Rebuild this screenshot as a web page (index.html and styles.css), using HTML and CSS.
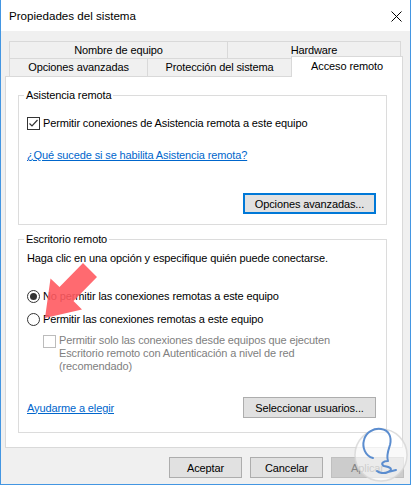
FILE: index.html
```html
<!DOCTYPE html>
<html lang="es">
<head>
<meta charset="utf-8">
<title>Propiedades del sistema</title>
<link rel="stylesheet" href="styles.css">
</head>
<body>
<div class="window">
  <div class="titlebar">
    <span class="title">Propiedades del sistema</span>
    <svg class="close" width="11" height="11" viewBox="0 0 11 11"><path d="M0.5 0.5 L10.5 10.5 M10.5 0.5 L0.5 10.5" stroke="#000" stroke-width="1" fill="none"/></svg>
  </div>
  <div class="content">
    <div class="tabs">
      <div class="tabrow row1">
        <div class="tab t-nombre">Nombre de equipo</div>
        <div class="tab t-hw">Hardware</div>
      </div>
      <div class="tabrow row2">
        <div class="tab t-opc">Opciones avanzadas</div>
        <div class="tab t-prot">Protección del sistema</div>
        <div class="tab t-acc selected">Acceso remoto</div>
      </div>
    </div>
    <div class="panel">
      <fieldset class="group g1">
        <legend>Asistencia remota</legend>
        <div class="row check-row">
          <span class="checkbox checked"><svg width="11" height="11" viewBox="0 0 11 11"><path d="M1.5 5.5 L4 8 L9.5 2" stroke="#333" stroke-width="1.2" fill="none"/></svg></span>
          <span>Permitir conexiones de Asistencia remota a este equipo</span>
        </div>
        <div class="row link-row"><a class="link" href="#">¿Qué sucede si se habilita Asistencia remota?</a></div>
        <div class="btn-row"><span class="btn focused wide">Opciones avanzadas...</span></div>
      </fieldset>
      <fieldset class="group g2">
        <legend>Escritorio remoto</legend>
        <div class="row desc-row">Haga clic en una opción y especifique quién puede conectarse.</div>
        <div class="row radio-row r1"><span class="radio on"></span><span>No permitir las conexiones remotas a este equipo</span></div>
        <div class="row radio-row r2"><span class="radio"></span><span>Permitir las conexiones remotas a este equipo</span></div>
        <div class="sub">
          <span class="checkbox disabled"></span>
          <span class="sub-text">Permitir solo las conexiones desde equipos que ejecuten<br>Escritorio remoto con Autenticación a nivel de red<br>(recomendado)</span>
        </div>
        <div class="bottom-row">
          <a class="link" href="#">Ayudarme a elegir</a>
          <span class="btn wide">Seleccionar usuarios...</span>
        </div>
      </fieldset>
    </div>
    <div class="footer">
      <span class="btn std">Aceptar</span>
      <span class="btn std">Cancelar</span>
      <span class="btn std disabled-btn">Aplicar</span>
    </div>
  </div>
  <svg class="overlay" width="412" height="486" viewBox="0 0 412 486">
    <polygon points="45,318 82,309.5 73.5,301 97,277 83,263 59.5,287 50.5,278.5" fill="#ff5a60" fill-opacity="0.9"/>
    <circle cx="381" cy="455" r="26" fill="#ffffff" fill-opacity="0.6" stroke="#d6d6d6" stroke-opacity="0.8" stroke-width="1.5"/>
    <path d="M373 458 C 365 456, 362 447, 364 440 C 366 432, 374 428, 381 429 C 389 430, 392 437, 390 445 C 388 451, 386 456, 388 461 C 383 461, 380 464, 384 466 C 390 467, 394 469, 388 472 C 384 474, 379 473, 377 471 M 388 472 L 396 470" fill="none" stroke="#5b8dcf" stroke-width="2" stroke-linecap="round" stroke-linejoin="round"/>
  </svg>
</div>
</body>
</html>
```

FILE: styles.css
```css
* { box-sizing: border-box; }
body {
  margin: 0;
  background: #ffffff;
  font-family: "Liberation Sans", Arial, sans-serif;
  font-size: 11px;
  letter-spacing: -0.12px;
  color: #000;
}
.window {
  position: relative;
  width: 411px;
  height: 485px;
  background: #f0f0f0;
  border: 1px solid #4396e2;
  border-top: none;
}
.titlebar {
  height: 31px;
  background: #fff;
  display: flex;
  align-items: center;
  padding-left: 8px;
}
.title { font-size: 11.6px; letter-spacing: 0; }
.close { margin-left: auto; margin-right: 8px; margin-top: 2px; }
.content {
  padding: 10px 7px 0 6px;
}
.tabs { padding-left: 2px; }
.tabrow { display: flex; }
.tab {
  background: #f0f0f0;
  border-top: 1px solid #d9d9d9;
  border-left: 1px solid #d9d9d9;
  text-align: center;
  white-space: nowrap;
}
.row1 .tab { height: 17px; line-height: 16px; }
.t-nombre { width: 218px; }
.t-hw { width: 174px; border-right: 1px solid #d9d9d9; }
.row2 { height: 18px; align-items: flex-end; }
.row2 .tab { height: 18px; line-height: 17px; }
.t-opc { width: 138px; }
.t-prot { width: 144px; }
.row2 .selected {
  position: relative;
  z-index: 1;
  width: 112px;
  height: 21px;
  line-height: 18px;
  margin-bottom: -1px;
  background: #fff;
  border-right: 1px solid #d9d9d9;
}
.panel {
  margin-left: -2px;
  background: #fff;
  border: 1px solid #d9d9d9;
  padding: 11px 15px 14px 12px;
}
.group {
  margin: 0;
  border: 1px solid #dcdcdc;
  padding: 0 10px 10px 8px;
  min-width: 0;
}
.group legend {
  padding: 0 2px;
  margin-left: -3px;
  line-height: 14px;
  height: 14px;
}
.g2 { margin-top: 7px; padding-bottom: 14px; }
.row {
  display: flex;
  align-items: center;
  height: 14px;
  line-height: 14px;
  white-space: nowrap;
}
.check-row { margin-top: 14px; gap: 3px; }
.link-row { margin-top: 18px; }
.link { color: #0066cc; text-decoration: underline; }
.btn-row { display: flex; justify-content: flex-end; margin-top: 31px; }
.btn {
  display: flex;
  align-items: center;
  justify-content: center;
  height: 21px;
  background: #e1e1e1;
  border: 1px solid #adadad;
  white-space: nowrap;
}
.wide { width: 133px; }
.focused { border: 2px solid #0078d7; }
.checkbox {
  width: 13px;
  height: 13px;
  flex: none;
  border: 1px solid #333;
  background: #fff;
  display: flex;
  align-items: center;
  justify-content: center;
}
.checkbox.disabled { border-color: #bcbcbc; }
.desc-row { margin-top: 5px; }
.radio-row { gap: 3px; }
.r1 { margin-top: 24px; }
.r2 { margin-top: 9px; }
.radio {
  width: 13px;
  height: 13px;
  flex: none;
  border: 1px solid #333;
  border-radius: 50%;
  background: #fff;
  display: flex;
  align-items: center;
  justify-content: center;
}
.radio.on::after {
  content: "";
  width: 7px;
  height: 7px;
  border-radius: 50%;
  background: #333;
}
.sub {
  display: flex;
  gap: 3px;
  margin-top: 8px;
  padding-left: 16px;
}
.sub .checkbox { margin-top: 1px; }
.sub-text { color: #808080; line-height: 13px; white-space: nowrap; }
.bottom-row {
  display: flex;
  justify-content: space-between;
  align-items: center;
  margin-top: 24px;
}
.footer {
  display: flex;
  justify-content: flex-end;
  gap: 8px;
  margin-top: 9px;
  margin-right: -1px;
}
.std { width: 73px; }
.disabled-btn {
  background: #cccccc;
  border-color: #bfbfbf;
  color: #838383;
}
.overlay {
  position: absolute;
  left: -1px;
  top: 0;
  pointer-events: none;
}
```
